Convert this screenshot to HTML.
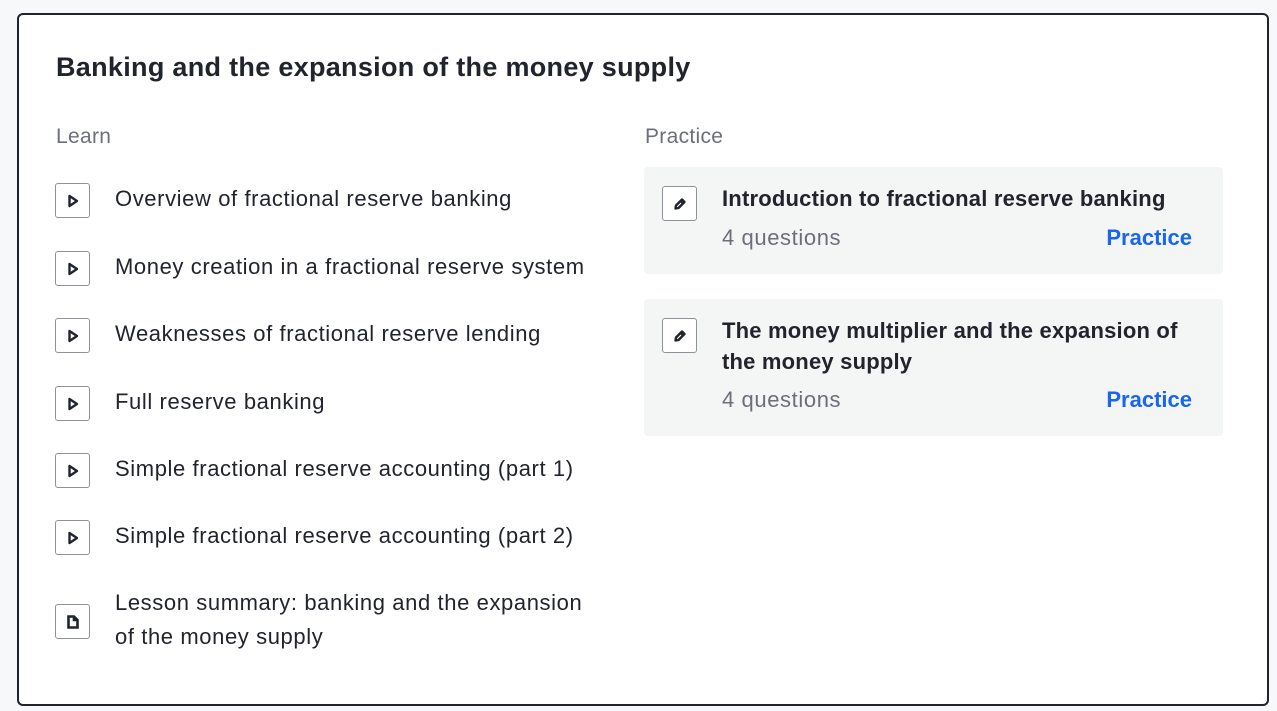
<!DOCTYPE html>
<html><head><style>
body{margin:0;width:1277px;height:711px;background:#f7f8fa;font-family:"Liberation Sans",sans-serif;color:#21242c;position:relative;overflow:hidden}
.card{position:absolute;left:17px;top:13px;width:1248px;height:689px;border:2.5px solid #21242c;border-radius:6px;background:#fff}
.abs{position:absolute}
h1{position:absolute;left:37px;top:37px;margin:0;font-size:27px;font-weight:bold;letter-spacing:0.3px}
.lbl{font-size:21px;color:#6b6f78;letter-spacing:0.3px}
.ic{position:absolute;width:35px;height:35px;border:1.5px solid #8e9199;border-radius:3px;box-sizing:border-box;display:flex;align-items:center;justify-content:center;background:#fff}
.it{position:absolute;left:96px;font-size:22px;line-height:34px;letter-spacing:0.6px}
.pc{position:absolute;left:625px;width:579px;background:#f4f5f5;border-radius:4px}
.pt{position:absolute;left:78px;font-size:22px;font-weight:bold;line-height:31px;letter-spacing:0.2px}
.q{position:absolute;left:78px;font-size:22px;color:#6b6f78;letter-spacing:0.6px}
.pr{position:absolute;right:31px;font-size:22px;font-weight:bold;color:#1865f2}
</style></head><body>
<div class="card">
<h1>Banking and the expansion of the money supply</h1>
<div class="abs lbl" style="left:37px;top:110px">Learn</div>
<div class="abs lbl" style="left:626px;top:110px">Practice</div>

<div class="ic" style="left:36px;top:168px"><svg width="14" height="14" viewBox="0 0 14 14"><path d="M3.5 2L11 7L3.5 12Z" fill="none" stroke="#21242c" stroke-width="2.4" stroke-linejoin="round"/></svg></div>
<div class="it" style="top:167px">Overview of fractional reserve banking</div>
<div class="ic" style="left:36px;top:236px"><svg width="14" height="14" viewBox="0 0 14 14"><path d="M3.5 2L11 7L3.5 12Z" fill="none" stroke="#21242c" stroke-width="2.4" stroke-linejoin="round"/></svg></div>
<div class="it" style="top:235px">Money creation in a fractional reserve system</div>
<div class="ic" style="left:36px;top:303px"><svg width="14" height="14" viewBox="0 0 14 14"><path d="M3.5 2L11 7L3.5 12Z" fill="none" stroke="#21242c" stroke-width="2.4" stroke-linejoin="round"/></svg></div>
<div class="it" style="top:302px">Weaknesses of fractional reserve lending</div>
<div class="ic" style="left:36px;top:371px"><svg width="14" height="14" viewBox="0 0 14 14"><path d="M3.5 2L11 7L3.5 12Z" fill="none" stroke="#21242c" stroke-width="2.4" stroke-linejoin="round"/></svg></div>
<div class="it" style="top:370px">Full reserve banking</div>
<div class="ic" style="left:36px;top:438px"><svg width="14" height="14" viewBox="0 0 14 14"><path d="M3.5 2L11 7L3.5 12Z" fill="none" stroke="#21242c" stroke-width="2.4" stroke-linejoin="round"/></svg></div>
<div class="it" style="top:437px">Simple fractional reserve accounting (part 1)</div>
<div class="ic" style="left:36px;top:505px"><svg width="14" height="14" viewBox="0 0 14 14"><path d="M3.5 2L11 7L3.5 12Z" fill="none" stroke="#21242c" stroke-width="2.4" stroke-linejoin="round"/></svg></div>
<div class="it" style="top:504px">Simple fractional reserve accounting (part 2)</div>
<div class="ic" style="left:36px;top:589px"><svg width="16" height="16" viewBox="0 0 16 16"><path d="M3.5 2.5H9L12.5 6V13.5H3.5Z M9 2.5V6H12.5" fill="none" stroke="#21242c" stroke-width="2.6" stroke-linejoin="miter"/></svg></div>
<div class="it" style="top:571px">Lesson summary: banking and the expansion<br>of the money supply</div>

<div class="pc" style="top:152px;height:107px">
<div class="ic" style="left:18px;top:19px"><svg width="16" height="16" viewBox="0 0 16 16"><path d="M3.5 12.5L4 9.5L10 3.5L12.5 6L6.5 12Z" fill="none" stroke="#21242c" stroke-width="2.4" stroke-linejoin="round"/><path d="M8.5 5L11 7.5" stroke="#21242c" stroke-width="2"/></svg></div>
<div class="pt" style="top:16px">Introduction to fractional reserve banking</div>
<div class="q" style="top:58px">4 questions</div>
<div class="pr" style="top:58px">Practice</div>
</div>
<div class="pc" style="top:284px;height:137px">
<div class="ic" style="left:18px;top:19px"><svg width="16" height="16" viewBox="0 0 16 16"><path d="M3.5 12.5L4 9.5L10 3.5L12.5 6L6.5 12Z" fill="none" stroke="#21242c" stroke-width="2.4" stroke-linejoin="round"/><path d="M8.5 5L11 7.5" stroke="#21242c" stroke-width="2"/></svg></div>
<div class="pt" style="top:16px">The money multiplier and the expansion of<br>the money supply</div>
<div class="q" style="top:88px">4 questions</div>
<div class="pr" style="top:88px">Practice</div>
</div>
</div>
</body></html>
